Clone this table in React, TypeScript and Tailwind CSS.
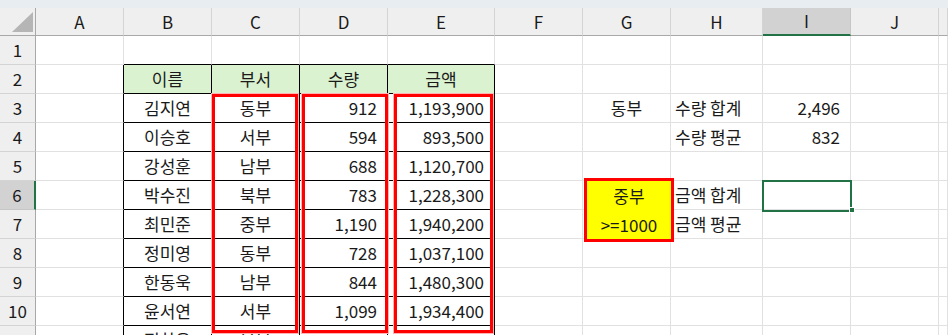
import React from 'react';

const COLS = ['A', 'B', 'C', 'D', 'E', 'F', 'G', 'H', 'I', 'J', ''];

type Align = 'l' | 'c' | 'r';
type Cell = { t: string; a: Align };

const c = (t: string): Cell => ({ t, a: 'c' });
const r = (t: string): Cell => ({ t, a: 'r' });
const l = (t: string): Cell => ({ t, a: 'l' });

// row number -> column letter -> cell
const data: Record<number, Record<string, Cell>> = {
  2: { B: c('이름'), C: c('부서'), D: c('수량'), E: c('금액') },
  3: { B: c('김지연'), C: c('동부'), D: r('912'), E: r('1,193,900'), G: c('동부'), H: l('수량 합계'), I: r('2,496') },
  4: { B: c('이승호'), C: c('서부'), D: r('594'), E: r('893,500'), H: l('수량 평균'), I: r('832') },
  5: { B: c('강성훈'), C: c('남부'), D: r('688'), E: r('1,120,700') },
  6: { B: c('박수진'), C: c('북부'), D: r('783'), E: r('1,228,300'), H: l('금액 합계') },
  7: { B: c('최민준'), C: c('중부'), D: r('1,190'), E: r('1,940,200'), H: l('금액 평균') },
  8: { B: c('정미영'), C: c('동부'), D: r('728'), E: r('1,037,100') },
  9: { B: c('한동욱'), C: c('남부'), D: r('844'), E: r('1,480,300') },
  10: { B: c('윤서연'), C: c('서부'), D: r('1,099'), E: r('1,934,400') },
  11: { B: c('정하은'), C: c('북부') },
};

const inTable = (row: number, col: string) => row >= 2 && ['B', 'C', 'D', 'E'].includes(col);

const grid = 'grid grid-cols-[36px_88px_88px_88px_88px_107px_88px_88px_92px_88px_88px_1fr]';

const App = () => {
  const rows = [1, 2, 3, 4, 5, 6, 7, 8, 9, 10, 11];

  return (
    <div className="relative w-[948px] h-[335px] overflow-hidden bg-white text-[17px] text-[#1a1a1a] font-['Noto_Sans_CJK_KR','Noto_Sans',sans-serif]">
      <div className="h-[8px] bg-[#e7edf0]" />

      {/* column headers */}
      <div className={`${grid} h-[28px]`}>
        <div className="relative bg-[#efefef] border-r border-b border-[#a8a8a8]">
          <svg className="absolute left-[12px] top-[4px]" width="21" height="20" viewBox="0 0 21 20">
            <polygon points="21,0 21,20 0,20" fill="#b5b5b5" />
          </svg>
        </div>
        {COLS.map((col) =>
          col === 'I' ? (
            <div key={col} className="flex items-center justify-center bg-[#d2d2d2] border-r border-[#c6c6c6] border-b-2 border-b-[#217346]">
              {col}
            </div>
          ) : (
            <div key={col || 'K'} className="flex items-center justify-center bg-[#efefef] border-r border-[#d4d4d4] border-b border-b-[#a8a8a8]">
              {col}
            </div>
          )
        )}
      </div>

      {rows.map((row) => (
        <div key={row} className={`${grid} h-[29px]`}>
          {row === 6 ? (
            <div className="flex items-center justify-center bg-[#d2d2d2] border-r-2 border-r-[#217346] border-b border-b-[#c6c6c6]">
              {row}
            </div>
          ) : (
            <div className="flex items-center justify-center bg-[#efefef] border-r border-r-[#a8a8a8] border-b border-b-[#d4d4d4]">
              {row === 11 ? '' : row}
            </div>
          )}
          {COLS.map((col, i) => {
            const cell = data[row]?.[col];
            const table = inTable(row, col);
            const rightBlack = table || (col === 'A' && row >= 2);
            const bottomBlack = table || (row === 1 && ['B', 'C', 'D', 'E'].includes(col));
            const head = row === 2 && table;
            const align =
              cell?.a === 'r' ? 'justify-end pr-[10px]' : cell?.a === 'l' ? 'justify-start pl-[4px]' : 'justify-center';
            return (
              <div
                key={i}
                className={`flex items-center whitespace-nowrap border-r border-b ${align} ${
                  rightBlack ? 'border-r-black' : 'border-r-[#e1e1e1]'
                } ${bottomBlack ? 'border-b-black' : 'border-b-[#e1e1e1]'} ${head ? 'bg-[#daf2d0]' : ''}`}
              >
                {cell?.t}
              </div>
            );
          })}
        </div>
      ))}

      {/* red outline shapes */}
      <div className="absolute left-[212px] top-[94px] w-[86px] h-[239px] border-[3px] border-[#ff0000] shadow-[0_0_0_1px_#ffb3b3]" />
      <div className="absolute left-[302px] top-[94px] w-[86px] h-[239px] border-[3px] border-[#ff0000] shadow-[0_0_0_1px_#ffb3b3]" />
      <div className="absolute left-[394px] top-[94px] w-[99px] h-[239px] border-[3px] border-[#ff0000] shadow-[0_0_0_1px_#ffb3b3]" />

      {/* criteria box */}
      <div className="absolute left-[584px] top-[178px] w-[90px] h-[64px] border-[3px] border-[#ff0000] bg-[#ffff00] flex flex-col">
        <div className="h-[29px] flex items-center justify-center">중부</div>
        <div className="h-[29px] flex items-center justify-center">&gt;=1000</div>
      </div>

      {/* active cell I6 */}
      <div className="absolute left-[762px] top-[180px] w-[90px] h-[32px] border-2 border-[#217346]" />
      <div className="absolute left-[849px] top-[207px] w-[6px] h-[6px] bg-[#217346] border border-white" />
    </div>
  );
};

export default App;
